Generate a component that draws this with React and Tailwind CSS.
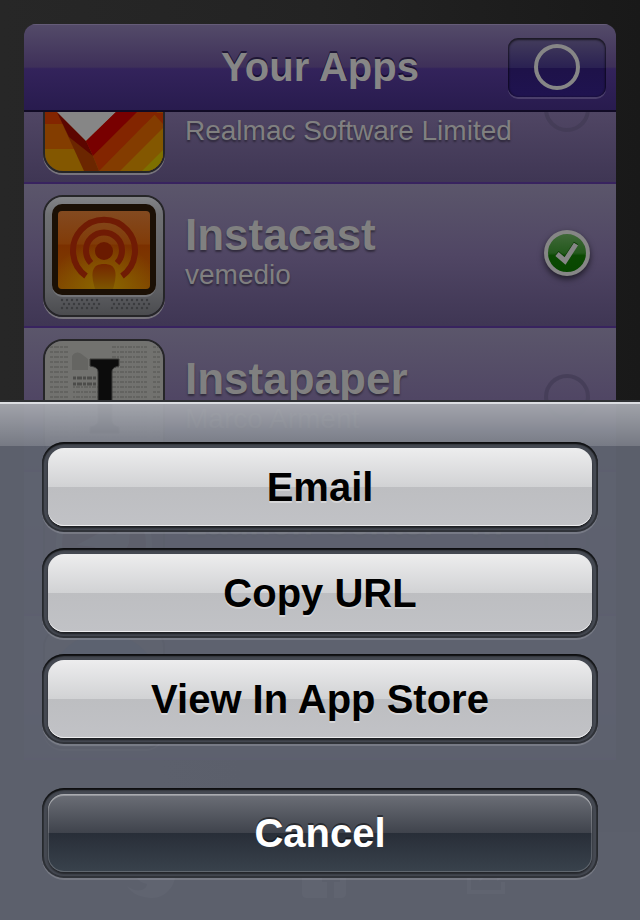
const iconFrame =
  "block size-[122px] shrink-0 overflow-hidden rounded-[20px] border-2 border-[#262628] shadow-[0_2px_0_#77747c]";

function ClearIcon() {
  return (
    <span className={iconFrame}>
      <svg viewBox="0 0 118 118" className="block size-full" aria-hidden="true">
        <rect width="118" height="71" fill="#832500" />
        <rect y="71" width="118" height="25" fill="#833d00" />
        <rect y="96" width="118" height="22" fill="#835700" />
        <path d="M112 59 L53 118 H118V59Z" fill="#833c00" />
        <path d="M92 59 H112 L54 118 L48 103Z" fill="#832500" />
        <path d="M118 75 L75 118 H118Z" fill="#835700" />
        <path d="M118 97 L97 118 H118Z" fill="#7d7000" />
        <path d="M108 60 H118 V71Z" fill="#832500" />
        <path d="M12 59 L41 88 L48 103 L54 118 H39Z" fill="#6b2600" />
        <path d="M12 59 L41 88 L48 103 L24 84Z" fill="#5c0600" />
        <path d="M12 59 L41 88 L71 59 V0 H12Z" fill="#868686" />
        <path d="M41 88 L71 59 H92 L48 103Z" fill="#780000" />
      </svg>
    </span>
  );
}

const grille = [0, 1, 2].flatMap((row) =>
  [0, 1, 2, 3, 4, 5, 6, 7].map((col) => ({ x: 17 + col * 5 - (row === 1 ? -2 : 0), y: 103 + row * 4 }))
);

function InstacastIcon() {
  return (
    <span className={iconFrame}>
      <svg viewBox="0 0 118 118" className="block size-full" aria-hidden="true">
        <defs>
          <linearGradient id="case" x1="0" y1="0" x2="0" y2="1">
            <stop offset="0" stopColor="#838487" />
            <stop offset="0.15" stopColor="#6f7073" />
            <stop offset="0.8" stopColor="#5c5d61" />
            <stop offset="1" stopColor="#4b4c4f" />
          </linearGradient>
          <linearGradient id="screen" x1="0" y1="0" x2="0" y2="1">
            <stop offset="0" stopColor="#834a20" />
            <stop offset="0.42" stopColor="#813b08" />
            <stop offset="0.44" stopColor="#7b3000" />
            <stop offset="1" stopColor="#804400" />
          </linearGradient>
          <radialGradient id="glow" cx="0.5" cy="1" r="0.6">
            <stop offset="0" stopColor="#8b6900" />
            <stop offset="1" stopColor="#8b6900" stopOpacity="0" />
          </radialGradient>
          <linearGradient id="body" x1="0" y1="0" x2="0" y2="1">
            <stop offset="0" stopColor="#742600" />
            <stop offset="1" stopColor="#7d5600" />
          </linearGradient>
        </defs>
        <rect width="118" height="118" fill="url(#case)" />
        <rect x="7" y="8" width="104" height="92" rx="11" fill="#737478" />
        <rect x="7" y="7" width="104" height="91" rx="10" fill="#1b1005" />
        <rect x="13" y="14" width="92" height="78" rx="4" fill="url(#screen)" />
        <rect x="13" y="14" width="92" height="78" rx="4" fill="url(#glow)" />
        <g fill="none" stroke="#701b04" strokeWidth="6">
          <path d="M41 79 A31 31 0 1 1 77 79" />
          <path d="M46 66 A18 18 0 1 1 72 66" />
        </g>
        <circle cx="59" cy="54" r="9" fill="#6a1a00" />
        <path d="M50 92 C45 75 47 67 59 67 C71 67 73 75 68 92Z" fill="url(#body)" />
        {grille.map((d) => (
          <g key={`${d.x}-${d.y}`} fill="#3a3b3e">
            <circle cx={d.x} cy={d.y} r="1.2" />
            <circle cx={d.x + 50} cy={d.y} r="1.2" />
          </g>
        ))}
      </svg>
    </span>
  );
}

const newsLines = Array.from({ length: 22 }, (_, i) => 6 + i * 5);

function InstapaperIcon() {
  return (
    <span className={iconFrame}>
      <svg viewBox="0 0 118 118" className="block size-full" aria-hidden="true">
        <rect width="118" height="118" fill="#72726f" />
        <g stroke="#636360" strokeWidth="2">
          {newsLines.map((y) => (
            <g key={y}>
              <path d={`M5 ${y}H23`} strokeDasharray="3 1 5 1" />
              <path d={`M67 ${y}H102`} strokeDasharray="4 1 2 1" />
              <path d={`M108 ${y}H116`} strokeDasharray="3 1" />
            </g>
          ))}
          {newsLines.slice(8).map((y) => (
            <path key={y} d={`M28 ${y}H64`} strokeDasharray="2 1 4 1" />
          ))}
        </g>
        <path d="M27 29 V15 C33 7 38 15 43 18 V29Z" fill="#656562" />
        <path d="M28 37H52M28 43H52" stroke="#4c4c4a" strokeWidth="3" strokeDasharray="3 1 5 1" />
        <path
          d="M45 18H74V25C70 26 67 27 67 31V79C67 83 70 85 74 86V92H45V86C50 85 53 83 53 79V31C53 27 50 26 45 25Z"
          fill="#0c0c0c"
          stroke="#3c3c3b"
        />
      </svg>
    </span>
  );
}

function LaunchIcon() {
  return (
    <span className={iconFrame}>
      <svg viewBox="0 0 118 118" className="block size-full" aria-hidden="true">
        <rect width="118" height="118" fill="#4d4656" />
        <circle cx="59" cy="59" r="45" fill="#5b2530" stroke="#77747a" strokeWidth="6" />
        <path d="M32 60 L58 46 L70 50 L86 34 L84 58 C76 80 54 76 50 62Z" fill="#777" />
      </svg>
    </span>
  );
}

function BlueIcon() {
  return (
    <span className={iconFrame}>
      <svg viewBox="0 0 118 118" className="block size-full" aria-hidden="true">
        <rect width="118" height="118" fill="#5c5d68" />
        <circle cx="59" cy="59" r="55" fill="#2c4a6e" />
      </svg>
    </span>
  );
}

function CheckMark() {
  return (
    <svg viewBox="0 0 50 50" className="block size-[50px] overflow-visible drop-shadow-[0_3px_3px_rgba(0,0,0,0.6)]" aria-hidden="true">
      <defs>
        <linearGradient id="green" x1="0" y1="0" x2="0" y2="1">
          <stop offset="0" stopColor="#426a3b" />
          <stop offset="0.5" stopColor="#24591d" />
          <stop offset="0.56" stopColor="#0b4a02" />
          <stop offset="1" stopColor="#074500" />
        </linearGradient>
      </defs>
      <circle cx="25" cy="25" r="21" fill="url(#green)" stroke="#868686" strokeWidth="4" />
      <path d="M15 26 L23 33 L34 16" fill="none" stroke="#083800" strokeWidth="5" transform="translate(0 -1)" />
      <path d="M15 26 L23 33 L34 16" fill="none" stroke="#868686" strokeWidth="5" />
    </svg>
  );
}

function AppRow({ icon, name, maker, checked, longName }) {
  return (
    <li className="flex h-36 shrink-0 items-center gap-5 border-b-2 border-[#38235f] bg-linear-to-b from-[#5b566b] via-[#504664] to-[#3f3654] pt-0.5 pr-6 pl-[19px]">
      {icon}
      <div className="min-w-0 flex-1 pb-1.5 whitespace-nowrap text-[#808080] [text-shadow:0_2px_2px_rgba(0,0,0,0.4)]">
        <h2
          className={
            longName
              ? "min-h-11 text-4xl leading-[44px] font-bold"
              : "min-h-11 text-[44px] leading-[44px] font-bold"
          }
        >
          {name}
        </h2>
        <p className="min-h-9 text-[28px] leading-9">{maker}</p>
      </div>
      <div className="-ml-5 shrink-0 pb-1.5">
        {checked ? (
          <CheckMark />
        ) : (
          <span className="m-0.5 block size-[46px] rounded-full border-4 border-[#423a54]/70" />
        )}
      </div>
    </li>
  );
}

function SheetButton({ children, dark }) {
  return (
    <button
      type="button"
      className="block w-full rounded-[22px] bg-[#454952] p-1.5 shadow-[0_2px_0_rgba(255,255,255,0.16),inset_0_2px_2px_rgba(0,0,0,0.75),inset_0_0_0_2px_rgba(0,0,0,0.3)]"
    >
      <span
        className={
          dark
            ? "flex h-[78px] items-center justify-center rounded-2xl bg-[linear-gradient(#6c6f77,#3f434c_50%,#282e38_50%,#39424c)] text-[40px] font-bold text-white shadow-[0_2px_2px_rgba(0,0,0,0.5),inset_0_2px_0_rgba(255,255,255,0.28),inset_0_0_0_1px_rgba(255,255,255,0.2)] [text-shadow:0_-2px_0_rgba(0,0,0,0.45)]"
            : "flex h-[78px] items-center justify-center rounded-2xl bg-[linear-gradient(#ededee,#d1d2d4_50%,#bdbec1_50%,#c1c2c6)] text-[40px] font-bold text-black shadow-[0_2px_2px_rgba(0,0,0,0.6),inset_0_-1px_0_#ececee] [text-shadow:0_2px_0_rgba(255,255,255,0.35)]"
        }
      >
        {children}
      </span>
    </button>
  );
}

export default function App() {
  return (
    <div className="relative flex h-screen flex-col overflow-hidden bg-linear-to-r from-[#272727] via-[#232323] to-[#191919] font-['Liberation_Sans',Arial,sans-serif]">
      <main className="mx-6 mt-6 flex min-h-0 flex-1 flex-col overflow-hidden rounded-t-xl">
        <header className="grid h-[88px] shrink-0 grid-cols-[1fr_auto_1fr] items-center border-b-2 border-[#110b25] bg-[linear-gradient(#544b69,#3e3059_50%,#33235b_52%,#281b4e)] shadow-[inset_0_1px_0_#655c78]">
          <h1 className="col-start-2 text-[40px] font-bold text-[#868686] [text-shadow:0_-2px_0_rgba(10,5,30,0.65)]">
            Your Apps
          </h1>
          <button
            type="button"
            aria-label="Select all"
            className="mr-2.5 flex h-[59px] w-[98px] items-center justify-center justify-self-end rounded-[10px] bg-[linear-gradient(#443d5c,#2a2152_50%,#1e1249_51%,#1f1350)] shadow-[0_2px_0_rgba(255,255,255,0.15),inset_0_1px_2px_1px_rgba(0,0,0,0.6)]"
          >
            <span className="block size-[46px] rounded-full border-4 border-[#868686]" />
          </button>
        </header>
        <ul className="flex min-h-0 flex-1 flex-col overflow-hidden">
          <li className="flex h-18 shrink-0 items-end overflow-hidden">
            <ul className="w-full">
              <AppRow icon={<ClearIcon />} maker="Realmac Software Limited" />
            </ul>
          </li>
          <AppRow icon={<InstacastIcon />} name="Instacast" maker="vemedio" checked />
          <AppRow icon={<InstapaperIcon />} name="Instapaper" maker="Marco Arment" />
          <AppRow icon={<LaunchIcon />} name="Launch Center - …" longName />
          <AppRow icon={<BlueIcon />} />
        </ul>
      </main>
      <footer className="flex h-22 shrink-0 items-center justify-around bg-[#303033] px-16 text-[#77777a]">
        <svg viewBox="0 0 56 56" className="size-14" fill="currentColor" aria-hidden="true">
          <path d="M2 38 C12 46 22 42 22 36 C12 34 8 26 6 14 C14 22 20 24 28 24 C26 10 40 4 46 12 L54 9 L50 18 C54 40 36 54 20 49 C12 48 6 44 2 38Z" />
        </svg>
        <svg viewBox="0 0 44 44" className="size-11" fill="currentColor" aria-hidden="true">
          <path d="M5 0H39Q44 0 44 5V39Q44 44 39 44H32V28H38V21H32V16Q32 12 38 12V6Q25 5 25 15V21H20V28H25V44H5Q0 44 0 39V5Q0 0 5 0Z" />
        </svg>
        <svg viewBox="0 0 48 44" className="h-11 w-12" fill="none" stroke="currentColor" strokeWidth="4" aria-hidden="true">
          <path d="M14 12H2V38H36V28" />
          <path d="M12 28Q16 14 30 14V6L44 17L30 27V20Q20 20 12 28Z" fill="currentColor" stroke="none" />
        </svg>
      </footer>

      <section
        role="dialog"
        aria-label="Share options"
        className="absolute inset-x-0 bottom-0 flex flex-col gap-4 border-t-2 border-[#2f3134] bg-[#5f6370]/95 bg-[linear-gradient(rgba(255,255,255,0.43),rgba(255,255,255,0.16))] bg-size-[100%_44px] bg-no-repeat px-[42px] pt-10 pb-[42px] shadow-[inset_0_2px_0_#dcdee2]"
      >
        <SheetButton>Email</SheetButton>
        <SheetButton>Copy URL</SheetButton>
        <SheetButton>View In App Store</SheetButton>
        <div className="pt-7">
          <SheetButton dark>Cancel</SheetButton>
        </div>
      </section>
    </div>
  );
}
